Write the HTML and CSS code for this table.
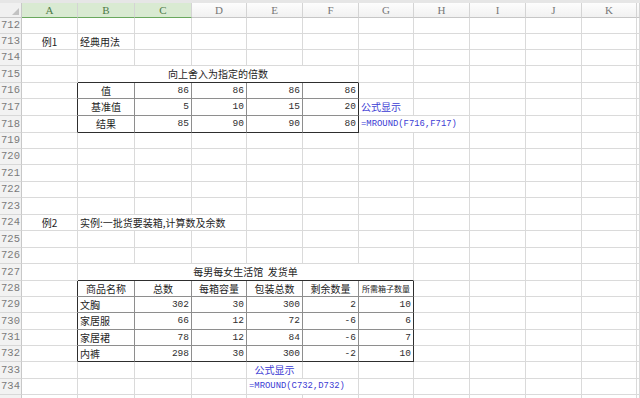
FILE: index.html
```html
<!DOCTYPE html>
<html lang="zh">
<head>
<meta charset="utf-8">
<title>MROUND</title>
<link rel="stylesheet" href="styles.css">
</head>
<body>
<div class="sheet">
  <div class="top"></div>
  <div class="row hh">
    <div class="corner"><svg width="7" height="7" viewBox="0 0 7 7"><polygon points="7,0 7,7 0,7" fill="#c2c2c2"/></svg></div>
    <div class="ch sel">A</div><div class="ch sel">B</div><div class="ch sel">C</div><div class="ch">D</div><div class="ch">E</div><div class="ch">F</div><div class="ch">G</div><div class="ch">H</div><div class="ch">I</div><div class="ch">J</div><div class="ch">K</div><div class="ch"></div>
  </div>

  <div class="row h16"><div class="rh">712</div><div></div><div></div><div></div><div></div><div></div><div></div><div></div><div></div><div></div><div></div><div></div><div></div></div>
  <div class="row h16"><div class="rh">713</div><div class="c">例1</div><div class="l">经典用法</div><div></div><div></div><div></div><div></div><div></div><div></div><div></div><div></div><div></div><div></div></div>
  <div class="row h16"><div class="rh">714</div><div></div><div></div><div></div><div></div><div></div><div></div><div></div><div></div><div></div><div></div><div></div><div></div></div>
  <div class="row h17"><div class="rh">715</div><div></div><div class="c s5 tt">向上舍入为指定的倍数</div><div></div><div></div><div></div><div></div><div></div><div></div></div>
  <div class="row h16"><div class="rh">716</div><div class="tl"></div><div class="c tb">值</div><div class="r n tb">86</div><div class="r n tb">86</div><div class="r n tb">86</div><div class="r n tb tr">86</div><div></div><div></div><div></div><div></div><div></div><div></div></div>
  <div class="row h17"><div class="rh">717</div><div class="tl"></div><div class="c tb">基准值</div><div class="r n tb">5</div><div class="r n tb">10</div><div class="r n tb">15</div><div class="r n tb tr">20</div><div class="l blue">公式显示</div><div></div><div></div><div></div><div></div><div></div></div>
  <div class="row h17"><div class="rh">718</div><div class="tl"></div><div class="c tb bt">结果</div><div class="r n tb bt">85</div><div class="r n tb bt">90</div><div class="r n tb bt">90</div><div class="r n tb bt tr">80</div><div class="l f blue s2">=MROUND(F716,F717)</div><div></div><div></div><div></div><div></div></div>
  <div class="row h16"><div class="rh">719</div><div></div><div></div><div></div><div></div><div></div><div></div><div></div><div></div><div></div><div></div><div></div><div></div></div>
  <div class="row h16"><div class="rh">720</div><div></div><div></div><div></div><div></div><div></div><div></div><div></div><div></div><div></div><div></div><div></div><div></div></div>
  <div class="row h17"><div class="rh">721</div><div></div><div></div><div></div><div></div><div></div><div></div><div></div><div></div><div></div><div></div><div></div><div></div></div>
  <div class="row h16"><div class="rh">722</div><div></div><div></div><div></div><div></div><div></div><div></div><div></div><div></div><div></div><div></div><div></div><div></div></div>
  <div class="row h17"><div class="rh">723</div><div></div><div></div><div></div><div></div><div></div><div></div><div></div><div></div><div></div><div></div><div></div><div></div></div>
  <div class="row h16"><div class="rh">724</div><div class="c">例2</div><div class="l s3">实例:一批货要装箱,计算数及余数</div><div></div><div></div><div></div><div></div><div></div><div></div><div></div><div></div></div>
  <div class="row h17"><div class="rh">725</div><div></div><div></div><div></div><div></div><div></div><div></div><div></div><div></div><div></div><div></div><div></div><div></div></div>
  <div class="row h16"><div class="rh">726</div><div></div><div></div><div></div><div></div><div></div><div></div><div></div><div></div><div></div><div></div><div></div><div></div></div>
  <div class="row h17"><div class="rh">727</div><div></div><div class="c s6 tt">每男每女生活馆&nbsp;&nbsp;发货单</div><div></div><div></div><div></div><div></div><div></div></div>
  <div class="row h16"><div class="rh">728</div><div class="tl"></div><div class="c tb">商品名称</div><div class="c tb">总数</div><div class="c tb">每箱容量</div><div class="c tb">包装总数</div><div class="c tb">剩余数量</div><div class="c tb tr small">所需箱子数量</div><div></div><div></div><div></div><div></div><div></div></div>
  <div class="row h16"><div class="rh">729</div><div class="tl"></div><div class="l tb">文胸</div><div class="r n tb">302</div><div class="r n tb">30</div><div class="r n tb">300</div><div class="r n tb">2</div><div class="r n tb tr">10</div><div></div><div></div><div></div><div></div><div></div></div>
  <div class="row h17"><div class="rh">730</div><div class="tl"></div><div class="l tb">家居服</div><div class="r n tb">66</div><div class="r n tb">12</div><div class="r n tb">72</div><div class="r n tb">-6</div><div class="r n tb tr">6</div><div></div><div></div><div></div><div></div><div></div></div>
  <div class="row h16"><div class="rh">731</div><div class="tl"></div><div class="l tb">家居裙</div><div class="r n tb">78</div><div class="r n tb">12</div><div class="r n tb">84</div><div class="r n tb">-6</div><div class="r n tb tr">7</div><div></div><div></div><div></div><div></div><div></div></div>
  <div class="row h16"><div class="rh">732</div><div class="tl"></div><div class="l tb bt">内裤</div><div class="r n tb bt">298</div><div class="r n tb bt">30</div><div class="r n tb bt">300</div><div class="r n tb bt">-2</div><div class="r n tb bt tr">10</div><div></div><div></div><div></div><div></div><div></div></div>
  <div class="row h17"><div class="rh">733</div><div></div><div></div><div></div><div></div><div class="c blue">公式显示</div><div></div><div></div><div></div><div></div><div></div><div></div><div></div></div>
  <div class="row h16"><div class="rh">734</div><div></div><div></div><div></div><div></div><div class="l f blue s2">=MROUND(C732,D732)</div><div></div><div></div><div></div><div></div><div></div><div></div></div>
  <div class="row h16"><div class="rh"></div><div></div><div></div><div></div><div></div><div></div><div></div><div></div><div></div><div></div><div></div><div></div><div></div></div>
</div>
</body>
</html>
```
FILE: styles.css
```css
html, body {
  margin: 0;
  padding: 0;
}
body {
  width: 640px;
  height: 398px;
  overflow: hidden;
  background: #ffffff;
  font-family: "Noto Sans CJK SC", sans-serif;
  font-size: 10px;
  color: #1e1e1e;
}
.sheet {
  width: 640px;
}
.top {
  height: 3px;
  background: #e6e6e6;
}
.row {
  display: grid;
  grid-template-columns: 22px 56px 57px 57px 55px 56px 56px 55px 56px 56px 56px 55px 1fr;
}
.row > div {
  box-sizing: border-box;
  border-right: 1px solid #dadada;
  border-bottom: 1px solid #dadada;
  display: flex;
  align-items: center;
  white-space: nowrap;
  overflow: hidden;
  min-width: 0;
  line-height: 1;
}
.hh { height: 15px; }
.h16 { height: 16px; }
.h17 { height: 17px; }

.corner {
  background: #f0f0f0;
  justify-content: flex-end;
  align-items: flex-end !important;
  padding: 0 2px 2px 0;
  border-right-color: #c8c8c8 !important;
  border-bottom-color: #c8c8c8 !important;
}
.ch {
  justify-content: center;
  background: linear-gradient(#fdfdfd, #f1f1f1);
  color: #777777;
  font-family: "Liberation Serif", serif;
  font-size: 11px;
  border-right-color: #d4d4d4 !important;
  border-bottom-color: #c6c6c6 !important;
}
.ch.sel {
  background: #d9ead2;
  color: #4d7a47;
  border-bottom-color: #6aa85e !important;
}
.rh {
  justify-content: center;
  background: #f2f2f2;
  color: #7a7a7a;
  font-family: "Liberation Mono", monospace;
  font-size: 10.5px;
  border-right-color: #c8c8c8 !important;
  border-bottom-color: #d8d8d8 !important;
}

.c { justify-content: center; }
.l { justify-content: flex-start; padding-left: 2px; }
.r { justify-content: flex-end; padding-right: 2px; }
.n {
  font-family: "Liberation Mono", monospace;
  font-size: 9.5px;
  color: #2e2e2e;
}
.f {
  font-family: "Liberation Mono", monospace;
  font-size: 8.9px;
}
.blue { color: #3b3bd4; }
.small { font-size: 8px; }

.s2 { grid-column: span 2; }
.s3 { grid-column: span 3; }
.s5 { grid-column: span 5; }
.s6 { grid-column: span 6; }

.tb {
  border-right-color: #8e8e8e !important;
  border-bottom-color: #8e8e8e !important;
}
.tr { border-right-color: #2e2e2e !important; }
.bt { border-bottom-color: #2e2e2e !important; }
.tl { border-right-color: #2e2e2e !important; }
.tt { border-bottom-color: #2e2e2e !important; }
```
